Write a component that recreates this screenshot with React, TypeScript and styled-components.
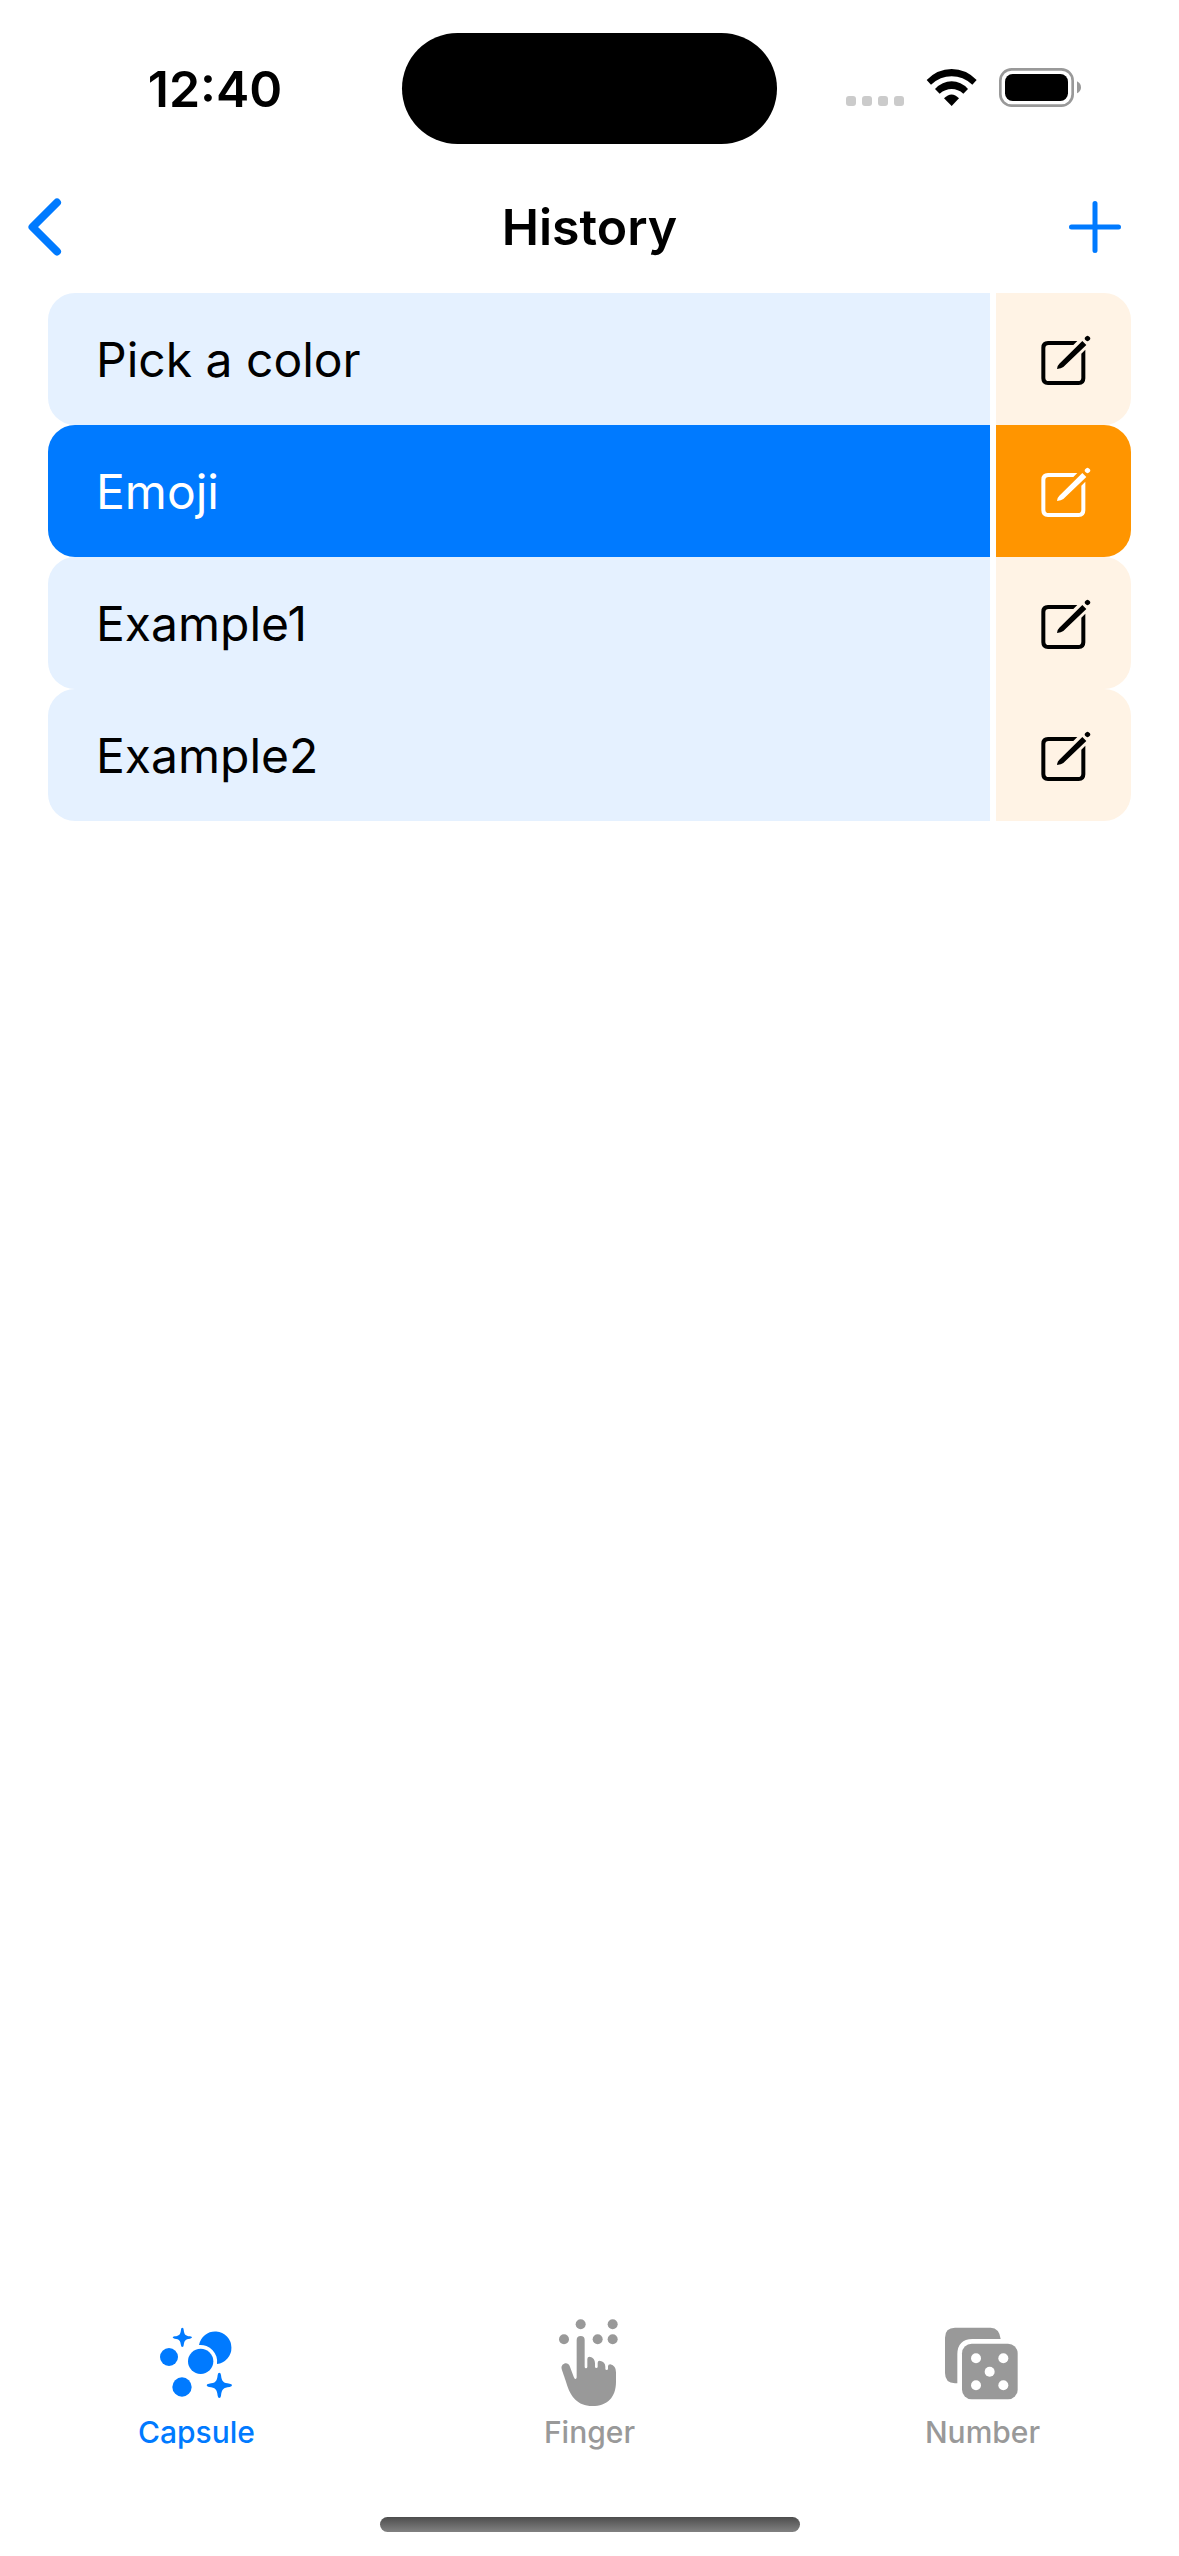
import React, { useState } from "react";
import styled, { createGlobalStyle } from "styled-components";

const BLUE = "#007aff";
const ORANGE = "#ff9500";
const GREY = "#999999";

const GlobalStyle = createGlobalStyle`
  *, *::before, *::after { box-sizing: border-box; }
  body {
    margin: 0;
    background: #ffffff;
    color: #000000;
    font-family: Inter, Roboto, "Liberation Sans", sans-serif;
  }
  button {
    margin: 0;
    padding: 0;
    border: 0;
    background: none;
    color: inherit;
    font: inherit;
    cursor: pointer;
  }
  svg { display: block; }
`;

const Screen = styled.div`
  display: flex;
  flex-direction: column;
  min-height: 100vh;
`;

const StatusBar = styled.div`
  display: grid;
  grid-template-columns: 1fr 375px 1fr;
  align-items: center;
  padding: 33px 0 17px;
`;

const Clock = styled.time`
  padding-left: 28px;
  text-align: center;
  font-size: 50px;
  line-height: 60px;
  font-weight: 600;
`;

const Island = styled.div`
  height: 111px;
  border-radius: 56px;
  background: #000000;
`;

const StatusIcons = styled.div`
  display: flex;
  justify-content: center;
  gap: 22px;
  padding-right: 30px;
`;

const NavBar = styled.header`
  display: grid;
  grid-template-columns: 1fr auto 1fr;
  align-items: center;
  height: 132px;
  padding: 0 28px;
`;

const Title = styled.h1`
  margin: 0;
  font-size: 50px;
  line-height: 60px;
  font-weight: 600;
`;

const NavButton = styled.button<{ $side: "left" | "right" }>`
  justify-self: ${(p) => (p.$side === "left" ? "start" : "end")};
  padding-right: ${(p) => (p.$side === "left" ? 0 : 30)}px;
  color: ${BLUE};
`;

const Main = styled.main`
  flex: 1;
  padding: 0 48px;
`;

const List = styled.ul`
  margin: 0;
  padding: 0;
  list-style: none;
`;

const Row = styled.li`
  display: grid;
  grid-template-columns: 1fr 135px;
  gap: 6px;
  height: 132px;
`;

const RowButton = styled.button<{ $active: boolean }>`
  padding: 2px 48px 0;
  border-radius: 27px 0 0 27px;
  background: ${(p) => (p.$active ? BLUE : "#e5f1ff")};
  color: ${(p) => (p.$active ? "#ffffff" : "#000000")};
  font-size: 48px;
  line-height: 60px;
  text-align: left;
`;

const EditButton = styled.button<{ $active: boolean }>`
  display: flex;
  align-items: center;
  justify-content: center;
  border-radius: 0 27px 27px 0;
  background: ${(p) => (p.$active ? ORANGE : "#fff3e5")};
  color: ${(p) => (p.$active ? "#ffffff" : "#000000")};
`;

const TabBar = styled.nav`
  display: grid;
  grid-template-columns: repeat(3, 1fr);
`;

const Tab = styled.button<{ $active: boolean }>`
  display: flex;
  flex-direction: column;
  align-items: center;
  gap: 4px;
  color: ${(p) => (p.$active ? BLUE : GREY)};
  font-size: 30px;
  line-height: 40px;
  font-weight: 500;
`;

const HomeIndicator = styled.div`
  width: 420px;
  height: 15px;
  margin: 65px auto 24px;
  border-radius: 8px;
  background: linear-gradient(#4d4d4d, #828282);
`;

const SignalIcon = () => (
  <svg width="58" height="41" viewBox="198 144 174 123" fill="#cbcbcb" aria-hidden="true">
    {[198, 246, 294, 342].map((x) => (
      <rect key={x} x={x} y="228" width="30" height="30" rx="9" />
    ))}
  </svg>
);

const WifiIcon = () => (
  <svg width="51" height="41" viewBox="438 144 153 123" aria-hidden="true">
    <path d="M440 180Q472 147 515 147Q558 147 590 180L577 194Q549 169 515 169Q481 169 453 194Z" />
    <path d="M465 207Q487 184 515 184Q543 184 564 207L550 221Q534 207 515 207Q496 207 479 221Z" />
    <path d="M492 235Q515 212 537 235L515 258Z" />
  </svg>
);

const BatteryIcon = () => (
  <svg width="82" height="41" viewBox="657 144 246 123" aria-hidden="true">
    <rect x="661" y="148" width="217" height="109" rx="34" fill="none" stroke={GREY} strokeWidth="8" />
    <rect x="675" y="162" width="189" height="81" rx="23" />
    <path d="M891 184Q903 190 903 202Q903 214 891 220Z" fill={GREY} />
  </svg>
);

const BackIcon = () => (
  <svg width="34" height="58" viewBox="0 0 34 58" fill="none" stroke="currentColor" strokeWidth="8" strokeLinecap="round" strokeLinejoin="round" aria-hidden="true">
    <path d="M29 4.500L4.500 29L29 53.500" />
  </svg>
);

const PlusIcon = () => (
  <svg width="52" height="52" viewBox="0 0 52 52" fill="none" stroke="currentColor" strokeWidth="5" strokeLinecap="round" aria-hidden="true">
    <path d="M26 2.500V49.500M2.500 26H49.500" />
  </svg>
);

const EditIcon = () => (
  <svg width="55" height="54" viewBox="48 36 165 162" fill="currentColor" aria-hidden="true">
    <path d="M172 63H84Q64 63 64 83V175Q64 195 84 195H176Q196 195 196 175V89L184 101V173Q184 183 174 183H86Q76 183 76 173V85Q76 75 86 75H160Z" />
    <path d="M187 63L199 75L130 141Q124 145 111 147Q112 136 118 131Z" />
    <rect x="195" y="48" width="15" height="15" rx="6" transform="rotate(45 202.500 55.500)" />
  </svg>
);

const CapsuleIcon = () => (
  <svg width="91" height="90" viewBox="153 84 273 270" fill="currentColor" aria-hidden="true">
    <path d="M297 165A49 49 0 1 1 351 222A50 50 0 0 0 297 165Z" />
    <circle cx="302" cy="214" r="38" />
    <circle cx="207" cy="201" r="27" />
    <circle cx="246" cy="291" r="29" />
    <path d="M247 113Q251 113 251 119C253 134 256 137 270 139Q276 140 276 142Q276 145 270 146C256 148 253 151 251 166Q251 171 247 171Q243 171 243 166C241 151 238 148 224 146Q218 145 218 142Q218 140 224 139C238 137 241 134 243 119Q243 113 247 113Z" />
    <path d="M358 248Q362 248 363 255C365 275 370 279 389 281Q396 282 396 286Q396 290 389 291C370 293 365 298 363 317Q362 324 358 324Q354 324 353 317C351 298 346 293 327 291Q320 290 320 286Q320 282 327 281C346 279 351 275 353 255Q354 248 358 248Z" />
  </svg>
);

const FingerIcon = () => (
  <svg width="91" height="90" viewBox="132 84 273 270" fill="currentColor" aria-hidden="true">
    <circle cx="242" cy="103" r="15" />
    <circle cx="338" cy="103" r="15" />
    <circle cx="192" cy="148" r="15" />
    <circle cx="293" cy="148" r="15" />
    <circle cx="338" cy="148" r="15" />
    <path d="M230 150a12 12 0 0 1 24 0V230q0 5 4 5q4 0 4-5V207q0-7 7-7q16 3 16 20V230q0 4 4 4t4-4V218q0-6 6-6q17 3 17 18V236q0 4 4 4t4-4V229q0-6 7-6q17 4 17 24V275C348 322 322 348 277 348C232 348 212 318 202 288C195 265 190 253 185 237C181 221 203 213 209 228L221 260q3 8 6 7q3-1 3-5Z" />
  </svg>
);

const DiceIcon = () => (
  <svg width="91" height="90" viewBox="171 84 273 270" fill="currentColor" aria-hidden="true">
    <path d="M232 280H225Q195 279 195 249V143Q195 113 225 113H332Q358 114 362 147H277Q233 148 232 192Z" />
    <rect x="246" y="161" width="167" height="167" rx="29" />
    <g fill="#ffffff">
      <circle cx="288" cy="205" r="15" />
      <circle cx="370" cy="205" r="15" />
      <circle cx="329" cy="245" r="15" />
      <circle cx="288" cy="286" r="15" />
      <circle cx="370" cy="286" r="15" />
    </g>
  </svg>
);

const entries = ["Pick a color", "Emoji", "Example1", "Example2"];

const tabs = [
  { label: "Capsule", Icon: CapsuleIcon },
  { label: "Finger", Icon: FingerIcon },
  { label: "Number", Icon: DiceIcon },
];

export default function App() {
  const [selected, setSelected] = useState("Emoji");
  const [tab, setTab] = useState("Capsule");

  return (
    <Screen>
      <GlobalStyle />
      <StatusBar>
        <Clock>12:40</Clock>
        <Island />
        <StatusIcons>
          <SignalIcon />
          <WifiIcon />
          <BatteryIcon />
        </StatusIcons>
      </StatusBar>
      <NavBar>
        <NavButton $side="left" aria-label="Back">
          <BackIcon />
        </NavButton>
        <Title>History</Title>
        <NavButton $side="right" aria-label="Add">
          <PlusIcon />
        </NavButton>
      </NavBar>
      <Main>
        <List>
          {entries.map((name) => (
            <Row key={name}>
              <RowButton $active={name === selected} onClick={() => setSelected(name)}>
                {name}
              </RowButton>
              <EditButton $active={name === selected} aria-label={`Edit ${name}`}>
                <EditIcon />
              </EditButton>
            </Row>
          ))}
        </List>
      </Main>
      <footer>
        <TabBar>
          {tabs.map(({ label, Icon }) => (
            <Tab key={label} $active={label === tab} onClick={() => setTab(label)}>
              <Icon />
              {label}
            </Tab>
          ))}
        </TabBar>
        <HomeIndicator />
      </footer>
    </Screen>
  );
}
